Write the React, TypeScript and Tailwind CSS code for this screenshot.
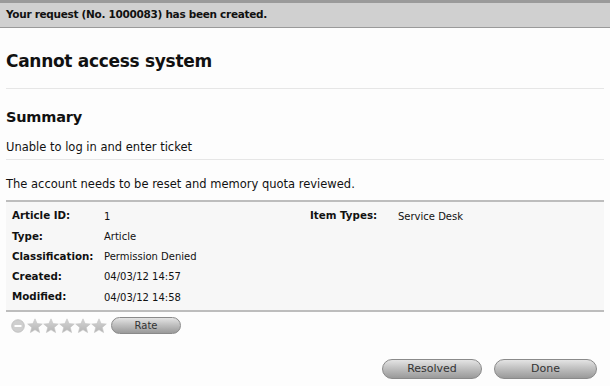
import React from 'react';

const details = [
  { label: 'Article ID:', value: '1' },
  { label: 'Type:', value: 'Article' },
  { label: 'Classification:', value: 'Permission Denied' },
  { label: 'Created:', value: '04/03/12 14:57' },
  { label: 'Modified:', value: '04/03/12 14:58' },
];

const Star = () => (
  <svg width="16" height="16" viewBox="0 0 16 16">
    <defs>
      <linearGradient id="starG" x1="0" y1="0" x2="0" y2="1">
        <stop offset="0" stopColor="#d6d6d6" />
        <stop offset="1" stopColor="#b4b4b4" />
      </linearGradient>
    </defs>
    <path
      d="M8 0.8 L10.1 5.6 L15.3 6 L11.3 9.4 L12.6 14.6 L8 11.8 L3.4 14.6 L4.7 9.4 L0.7 6 L5.9 5.6 Z"
      fill="url(#starG)"
      stroke="#c4c4c4"
      strokeWidth="0.6"
    />
  </svg>
);

const Pill = ({ children, className }: { children: React.ReactNode; className: string }) => (
  <button
    className={`rounded-full border border-[#8a8a8a] bg-gradient-to-b from-[#e4e4e4] via-[#bdbdbd] to-[#9a9a9a] text-[#333] ${className}`}
  >
    {children}
  </button>
);

export default function App() {
  return (
    <div
      className="w-[610px] h-[386px] bg-[#fdfdfd] text-[#111] overflow-hidden"
      style={{ fontFamily: '"DejaVu Sans", Verdana, sans-serif' }}
    >
      <div className="h-[28px] border-t-[3px] border-b border-[#9a9a9a] bg-[#d0d0d0] flex items-center px-[6px]">
        <span className="text-[10.5px] font-bold tracking-[-0.3px]">Your request (No. 1000083) has been created.</span>
      </div>

      <div className="px-[6px]">
        <h1 className="text-[17px] font-bold tracking-[-0.3px] pt-[21px] pb-[15px] leading-[24px] border-b border-[#e6e6e6]">
          Cannot access system
        </h1>
        <h2 className="text-[14.5px] font-bold tracking-[-0.2px] pt-[18px] leading-[20px]">Summary</h2>
        <p className="text-[11.5px] pt-[12px] pb-[4px] leading-[16px] border-b border-[#e6e6e6]">
          Unable to log in and enter ticket
        </p>
        <p className="text-[11.5px] pt-[16px] leading-[16px]">
          The account needs to be reset and memory quota reviewed.
        </p>

        <div className="mt-[8px] border-y-2 border-[#bdbdbd] bg-[#f7f7f7] h-[112px] flex pt-[4px] px-[6px] text-[10px]">
          <div className="w-[298px] flex flex-col">
            {details.map((d) => (
              <div key={d.label} className="flex h-[20.25px] items-center">
                <span className="w-[92px] font-bold text-[10.3px]">{d.label}</span>
                <span>{d.value}</span>
              </div>
            ))}
          </div>
          <div className="flex h-[20px] items-center">
            <span className="w-[88px] font-bold text-[10.3px]">Item Types:</span>
            <span>Service Desk</span>
          </div>
        </div>

        <div className="flex items-center mt-[5px] pl-[5px]">
          <svg width="14" height="14" viewBox="0 0 14 14" className="mr-[2px]">
            <circle cx="7" cy="7" r="6.3" fill="#cfcfcf" stroke="#bdbdbd" strokeWidth="0.8" />
            <rect x="3.5" y="6" width="7" height="2" fill="#fff" />
          </svg>
          <Star />
          <Star />
          <Star />
          <Star />
          <Star />
          <Pill className="ml-[4px] w-[70px] h-[17px] text-[10px] leading-[15px]">Rate</Pill>
        </div>

        <div className="flex justify-end gap-[12px] mt-[25px] pr-[7px]">
          <Pill className="w-[100px] h-[20px] text-[11px] leading-[18px]">Resolved</Pill>
          <Pill className="w-[103px] h-[20px] text-[11px] leading-[18px]">Done</Pill>
        </div>
      </div>
    </div>
  );
}
